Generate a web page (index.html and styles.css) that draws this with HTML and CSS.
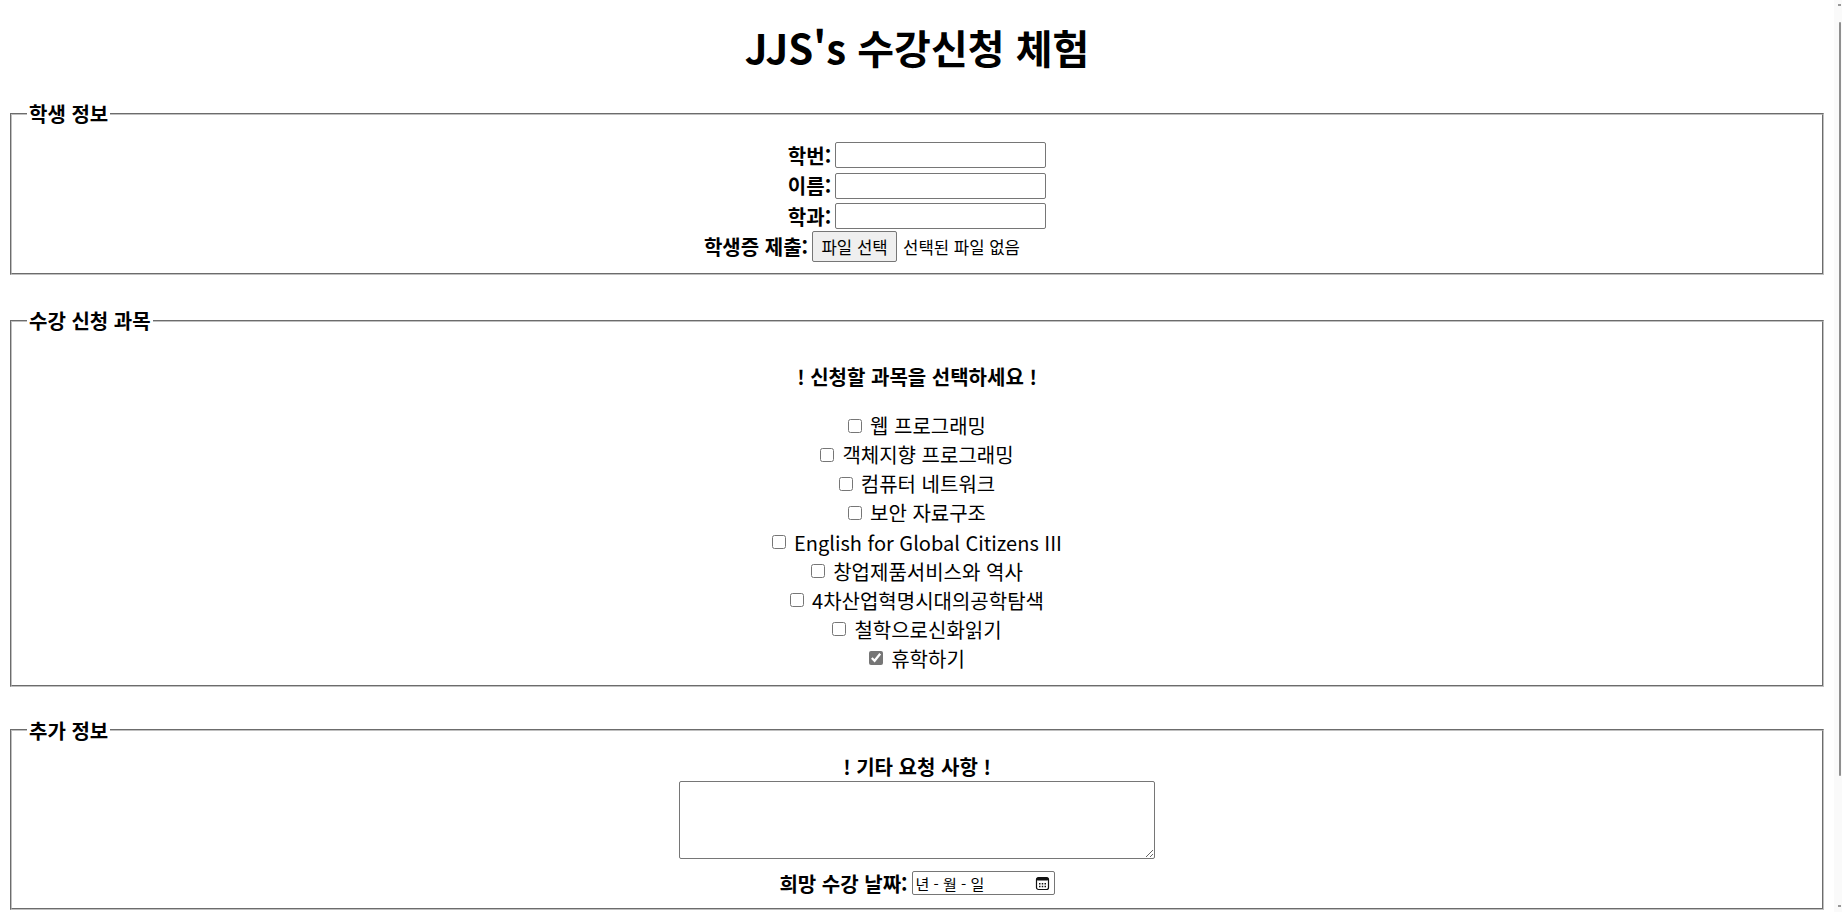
FILE: index.html
```html
<!DOCTYPE html>
<html lang="ko">
<head>
<meta charset="utf-8">
<title>JJS's 수강신청 체험</title>
<link rel="stylesheet" href="styles.css">
</head>
<body>
<h1 class="title">JJS's 수강신청 체험</h1>

<fieldset class="box box-student">
  <legend class="legend">학생 정보</legend>
  <div class="row"><label class="lbl" for="sid">학번:</label><input class="text-input" id="sid" type="text"></div>
  <div class="row"><label class="lbl" for="sname">이름:</label><input class="text-input" id="sname" type="text"></div>
  <div class="row"><label class="lbl" for="smajor">학과:</label><input class="text-input" id="smajor" type="text"></div>
  <div class="row row-file"><span class="lbl">학생증 제출:</span><span class="file-input"><span class="file-btn">파일 선택</span><span class="file-name">선택된 파일 없음</span></span></div>
</fieldset>

<fieldset class="box box-course">
  <legend class="legend">수강 신청 과목</legend>
  <p class="notice">! 신청할 과목을 선택하세요 !</p>
  <div class="course-list">
    <label class="course"><input class="chk" type="checkbox"><span>웹 프로그래밍</span></label>
    <label class="course"><input class="chk" type="checkbox"><span>객체지향 프로그래밍</span></label>
    <label class="course"><input class="chk" type="checkbox"><span>컴퓨터 네트워크</span></label>
    <label class="course"><input class="chk" type="checkbox"><span>보안 자료구조</span></label>
    <label class="course"><input class="chk" type="checkbox"><span>English for Global Citizens III</span></label>
    <label class="course"><input class="chk" type="checkbox"><span>창업제품서비스와 역사</span></label>
    <label class="course"><input class="chk" type="checkbox"><span>4차산업혁명시대의공학탐색</span></label>
    <label class="course"><input class="chk" type="checkbox"><span>철학으로신화읽기</span></label>
    <label class="course"><input class="chk" type="checkbox" checked><span>휴학하기</span></label>
  </div>
</fieldset>

<fieldset class="box box-extra">
  <legend class="legend">추가 정보</legend>
  <div class="extra-head">! 기타 요청 사항 !</div>
  <div class="extra-area"><textarea class="memo"></textarea></div>
  <div class="row row-date"><span class="lbl">희망 수강 날짜:</span><span class="date-input"><span class="date-text">년 - 월 - 일</span><svg class="cal" width="15" height="15" viewBox="0 0 15 15"><rect x="1.5" y="1.5" width="12" height="12" rx="2" fill="none" stroke="#111" stroke-width="1.2"/><rect x="1.5" y="1.5" width="12" height="3" rx="1.5" fill="#111"/><rect x="4" y="7" width="1.5" height="1.5" fill="#111"/><rect x="6.75" y="7" width="1.5" height="1.5" fill="#111"/><rect x="9.5" y="7" width="1.5" height="1.5" fill="#111"/><rect x="4" y="9.75" width="1.5" height="1.5" fill="#111"/><rect x="6.75" y="9.75" width="1.5" height="1.5" fill="#111"/><rect x="9.5" y="9.75" width="1.5" height="1.5" fill="#111"/></svg></span></div>
</fieldset>

<div class="scrollbar" aria-hidden="true"><span class="scroll-arrow scroll-arrow-top"></span><span class="scroll-thumb"></span><span class="scroll-arrow scroll-arrow-bottom"></span></div>
</body>
</html>
```

FILE: styles.css
```css
html {
  background: #fff;
}

body {
  margin: 0 16px 8px 8px;
  font-family: "Noto Sans CJK KR", "Noto Sans", sans-serif;
  font-size: 20px;
  color: #000;
}

.title {
  margin: 18px 0 23px;
  font-size: 40px;
  line-height: 58px;
  font-weight: 700;
  text-align: center;
}

.box {
  margin: 0 2px;
  border: 2px groove #c0c0c0;
  padding: 0 15px;
}

.legend {
  padding: 0 2px;
  font-weight: 700;
  line-height: 29px;
}

.box-student {
  padding-top: 11.7px;
  padding-bottom: 10.6px;
}

.row {
  display: flex;
  justify-content: center;
  align-items: center;
  gap: 4px;
  height: 30.67px;
}

.lbl {
  font-weight: 700;
}

.text-input {
  box-sizing: border-box;
  width: 211px;
  height: 26px;
  margin: 0;
  border: 1px solid #767676;
  border-radius: 2px;
  padding: 1px 2px;
  background: #fff;
}

.file-input {
  display: inline-flex;
  align-items: center;
  gap: 6px;
  width: 318px;
  font-size: 16.7px;
}

.file-btn {
  box-sizing: border-box;
  display: inline-flex;
  align-items: center;
  justify-content: center;
  width: 85px;
  height: 31px;
  border: 1px solid #767676;
  border-radius: 2px;
  background: #efefef;
}

.box-course {
  margin-top: 31.5px;
  padding-top: 0;
  padding-bottom: 12px;
}

.notice {
  margin: 27px 0 19.7px;
  font-weight: 700;
  line-height: 29px;
  text-align: center;
}

.course-list {
  display: flex;
  flex-direction: column;
}

.course {
  display: flex;
  justify-content: center;
  align-items: center;
  gap: 8px;
  height: 29.1px;
}

.chk {
  width: 14px;
  height: 14px;
  margin: 0;
  accent-color: #767676;
}

.box-extra {
  margin-top: 29px;
  padding-top: 6.6px;
  padding-bottom: 11.5px;
}

.extra-head {
  font-weight: 700;
  line-height: 29px;
  text-align: center;
}

.extra-area {
  display: flex;
  justify-content: center;
}

.memo {
  box-sizing: border-box;
  width: 476px;
  height: 78px;
  margin: 0;
  border: 1px solid #767676;
  border-radius: 2px;
}

.row-date {
  margin-top: 11.5px;
  height: 26px;
}

.date-input {
  box-sizing: border-box;
  display: inline-flex;
  align-items: center;
  justify-content: space-between;
  width: 143px;
  height: 24px;
  padding: 0 4px 0 3px;
  border: 1px solid #767676;
  border-radius: 2px;
  font-size: 15px;
  font-weight: 400;
}

.cal {
  display: block;
}

.scrollbar {
  position: fixed;
  top: 0;
  right: 0;
  bottom: 0;
  width: 8px;
  background: #fafafa;
}

.scroll-thumb {
  position: absolute;
  top: 22px;
  right: 1px;
  width: 2px;
  height: 754px;
  border-radius: 1px;
  background: #8f8f8f;
}

.scroll-arrow {
  position: absolute;
  right: 1px;
  width: 3px;
  height: 2px;
  background: #9a9a9a;
}

.scroll-arrow-top {
  top: 4px;
}

.scroll-arrow-bottom {
  bottom: 5px;
}
```
